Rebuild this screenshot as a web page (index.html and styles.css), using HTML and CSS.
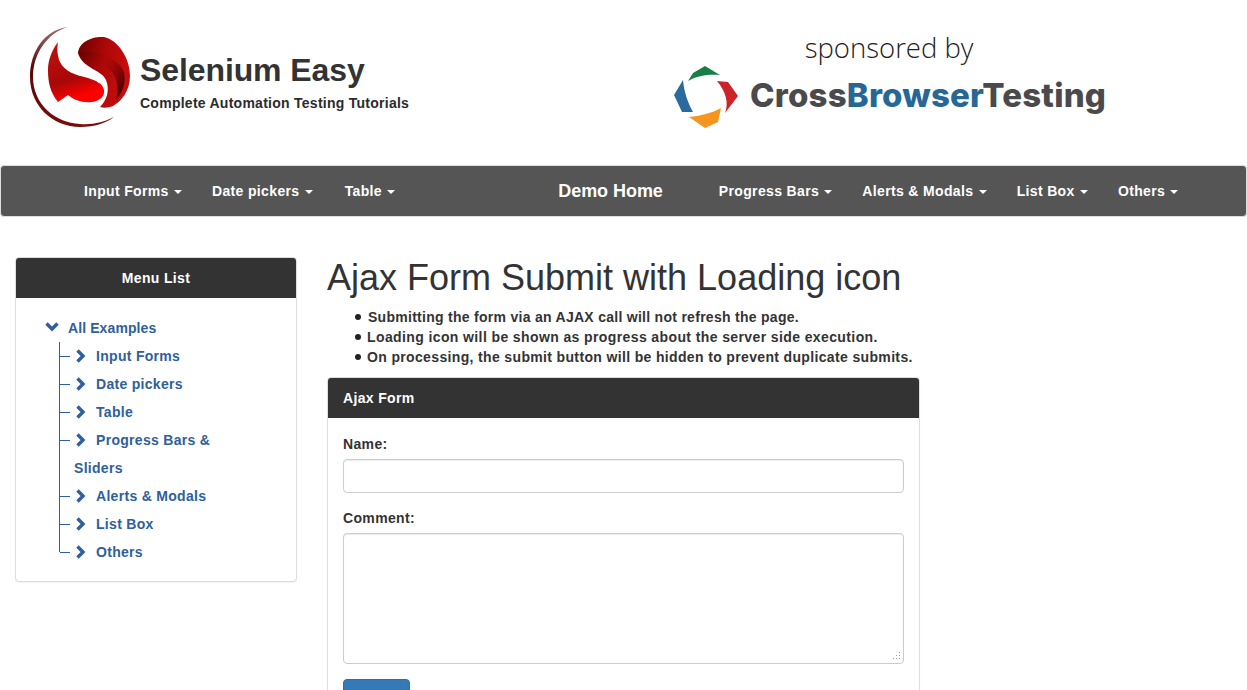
FILE: index.html
```html
<!DOCTYPE html>
<html lang="en">
<head>
  <meta charset="UTF-8" />
  <title>Selenium Easy - Ajax Form Submit</title>
  <link rel="stylesheet" href="styles.css">
</head>
<body>
  <header class="top">
    <div class="brand">
      <svg class="brand-logo" width="110" height="110" viewBox="25 22 110 110">
        <defs>
          <linearGradient id="ringGrad" x1="0.5" y1="0" x2="0.6" y2="1">
            <stop offset="0" stop-color="#9a6a6a" />
            <stop offset="0.35" stop-color="#5a0505" />
            <stop offset="1" stop-color="#7a0c0c" />
          </linearGradient>
          <linearGradient id="topGrad" x1="0" y1="0" x2="1" y2="0.3">
            <stop offset="0" stop-color="#6a0000" />
            <stop offset="0.55" stop-color="#b00808" />
            <stop offset="1" stop-color="#c80d0d" />
          </linearGradient>
          <linearGradient id="foldGrad" x1="0" y1="0" x2="1" y2="0.6">
            <stop offset="0" stop-color="#5a0000" stop-opacity="0.7" />
            <stop offset="0.5" stop-color="#a00606" stop-opacity="0.2" />
            <stop offset="1" stop-color="#3a0000" stop-opacity="0.8" />
          </linearGradient>
          <linearGradient id="lowGrad" x1="0.3" y1="0" x2="0.6" y2="1">
            <stop offset="0" stop-color="#c01010" />
            <stop offset="0.6" stop-color="#a80808" />
            <stop offset="0.9" stop-color="#ff0000" />
          </linearGradient>
        </defs>
        <path fill="url(#ringGrad)" d="M68,27 C44,30 30,52 30,77 C30,106 53,127 80,127 C95,127 106,123 114,117 C104,122 93,125 80,124 C55,123 33,104 33,77 C33,54 47,33 68,27 Z" />
        <path fill="url(#topGrad)" d="M78,53 C79,42 92,36 104,37 C118,40 130,58 130,76 C130,90 122,101 113,106 C108,108 104,108 100,107 C107,100 110,90 106,80 C102,70 82,68 78,53 Z" />
        <path fill="url(#foldGrad)" d="M78,53 C92,49 112,54 122,68 C127,77 125,90 116,100 C119,88 118,76 108,68 C98,61 84,62 78,53 Z" />
        <path fill="url(#lowGrad)" d="M58,42 C52,50 48,60 48,70 C48,82 50,92 58,102 L68,95 C74,100 82,103 92,102 C100,101 105,96 104,90 C103,84 97,81 88,78 C76,75 65,72 60,62 C57,55 57,48 58,42 Z" />
      </svg>
      <div class="brand-text">
        <div class="brand-name">Selenium Easy</div>
        <div class="brand-tag">Complete Automation Testing Tutorials</div>
      </div>
    </div>
    <div class="sponsor">
      <div class="sponsor-by">sponsored by</div>
      <div class="cbt">
        <svg class="cbt-logo" width="66" height="66" viewBox="672 64 66 66">
          <path fill="#1a7f45" d="M705,66 L720,75 C710,74 698,75 688,81 L693,73 Z" />
          <path fill="#2a6a9e" d="M683,80 L674,95 L682,112 L693,112 C688,103 684,92 683,80 Z" />
          <path fill="#cc2229" d="M717,81 L728,82 L738,96 L725,113 C729,103 726,92 717,81 Z" />
          <path fill="#f7941e" d="M689,117 L705,128 L718,122 L721,108 C712,113 700,116 689,117 Z" />
        </svg>
        <div class="cbt-name">Cross<span class="cbt-blue">Browser</span>Testing</div>
      </div>
    </div>
  </header>

  <nav class="navbar">
    <ul class="nav-group">
      <li>Input Forms <span class="caret"></span></li>
      <li class="nav-wide">Date pickers <span class="caret"></span></li>
      <li>Table <span class="caret"></span></li>
    </ul>
    <a class="nav-home">Demo Home</a>
    <ul class="nav-group">
      <li>Progress Bars <span class="caret"></span></li>
      <li>Alerts &amp; Modals <span class="caret"></span></li>
      <li>List Box <span class="caret"></span></li>
      <li>Others <span class="caret"></span></li>
    </ul>
  </nav>

  <svg width="0" height="0" class="icon-defs">
    <symbol id="chev-right" viewBox="0 0 12 14">
      <path d="M2.5,1.5 L8,7 L2.5,12.5" fill="none" stroke="currentColor" stroke-width="3.4" />
    </symbol>
    <symbol id="chev-down" viewBox="0 0 14 12">
      <path d="M1.5,2.5 L7,8 L12.5,2.5" fill="none" stroke="currentColor" stroke-width="3.4" />
    </symbol>
  </svg>

  <div class="content">
    <aside class="panel side">
      <div class="panel-head center">Menu List</div>
      <div class="side-body">
        <div class="tree-root">
          <svg class="chev-down" width="14" height="12"><use href="#chev-down" /></svg>
          All Examples
        </div>
        <ul class="tree">
          <li><svg class="chev" width="12" height="14"><use href="#chev-right" /></svg>Input Forms</li>
          <li><svg class="chev" width="12" height="14"><use href="#chev-right" /></svg>Date pickers</li>
          <li><svg class="chev" width="12" height="14"><use href="#chev-right" /></svg>Table</li>
          <li><svg class="chev" width="12" height="14"><use href="#chev-right" /></svg>Progress Bars &amp; Sliders</li>
          <li><svg class="chev" width="12" height="14"><use href="#chev-right" /></svg>Alerts &amp; Modals</li>
          <li><svg class="chev" width="12" height="14"><use href="#chev-right" /></svg>List Box</li>
          <li><svg class="chev" width="12" height="14"><use href="#chev-right" /></svg>Others</li>
        </ul>
      </div>
    </aside>

    <main class="main">
      <h2>Ajax Form Submit with Loading icon</h2>
      <ul class="notes">
        <li>Submitting the form via an AJAX call will not refresh the page.</li>
        <li>Loading icon will be shown as progress about the server side execution.</li>
        <li>On processing, the submit button will be hidden to prevent duplicate submits.</li>
      </ul>
      <div class="panel form-panel">
        <div class="panel-head">Ajax Form</div>
        <form class="form-body">
          <label for="title">Name:</label>
          <input id="title" type="text">
          <label for="description">Comment:</label>
          <textarea id="description"></textarea>
          <button type="button">Submit</button>
        </form>
      </div>
    </main>
  </div>
</body>
</html>
```

FILE: styles.css
```css
body {
  font-family: "Liberation Sans", Arial, sans-serif;
  font-size: 14px;
  font-weight: bold;
  letter-spacing: 0.35px;
  line-height: 20px;
  color: #333;
  background: #fff;
  margin: 0;
}

ul {
  list-style: none;
  margin: 0;
  padding: 0;
}

/* top logos */
.top {
  display: flex;
  height: 165px;
}

.brand {
  display: flex;
  align-items: flex-start;
  width: 665px;
  padding: 22px 0 0 25px;
  box-sizing: border-box;
}

.brand-logo {
  flex: none;
}

.brand-text {
  margin: 26px 0 0 5px;
}

.brand-name {
  font-size: 32px;
  line-height: 44px;
  letter-spacing: -0.1px;
}

.brand-tag {
  margin-top: 1px;
  color: #2b2b2b;
  letter-spacing: 0.26px;
}

.sponsor {
  padding: 30px 0 0 7px;
}

.sponsor-by {
  font-family: "Open Sans", sans-serif;
  font-weight: 300;
  font-size: 27.5px;
  line-height: 36px;
  letter-spacing: 0;
  color: #222;
  text-align: center;
  margin-bottom: -2px;
}

.cbt {
  display: flex;
  align-items: center;
  gap: 12px;
}

.cbt-name {
  font-family: Inter, sans-serif;
  font-weight: 800;
  font-size: 33px;
  letter-spacing: 0.2px;
  line-height: 40px;
  color: #4a4a4c;
  margin-top: -4px;
}

.cbt-blue {
  color: #266796;
}

/* navbar */
.navbar {
  display: flex;
  align-items: center;
  height: 50px;
  padding-left: 68px;
  background: #555;
  border: 1px solid #ddd;
  border-radius: 4px;
  color: #fff;
}

.nav-group {
  display: flex;
}

.nav-group li {
  padding: 0 15px;
  white-space: nowrap;
}

.nav-group .nav-wide {
  padding-right: 17px;
}

.caret {
  display: inline-block;
  width: 0;
  height: 0;
  margin-left: 1px;
  vertical-align: middle;
  border-top: 4px solid #fff;
  border-left: 4px solid transparent;
  border-right: 4px solid transparent;
}

.nav-home {
  font-size: 18px;
  letter-spacing: -0.05px;
  margin: 0 41px 0 148px;
}

/* page columns */
.icon-defs {
  display: block;
  height: 0;
}

.content {
  display: flex;
  align-items: flex-start;
  gap: 30px;
  padding: 40px 0 0 15px;
}

.panel {
  border: 1px solid #ddd;
  border-radius: 4px;
  box-shadow: 0 1px 1px rgba(0,0,0,0.05);
  background: #fff;
}

.panel-head {
  background: #333;
  color: #fff;
  padding: 10px 15px;
  border-radius: 3px 3px 0 0;
  height: 20px;
}

.center {
  text-align: center;
}

/* side tree */
.side {
  width: 280px;
  flex: none;
}

.side-body {
  padding: 16px 15px 15px 29px;
  color: #2f6099;
  line-height: 28px;
  letter-spacing: 0.3px;
}

.tree-root {
  display: flex;
  align-items: center;
  height: 28px;
  letter-spacing: 0.1px;
}

.chev-down {
  margin-right: 9px;
  margin-top: -3px;
}

.tree {
  margin-left: 14px;
  margin-right: 50px;
}

.tree li {
  position: relative;
  padding-left: 14px;
  border-left: 1px solid #2f6099;
}

.tree li::before {
  content: "";
  position: absolute;
  left: 0;
  top: 14px;
  width: 10px;
  border-top: 1px solid #2f6099;
}

.tree li:last-child {
  border-left-color: transparent;
}

.tree li:last-child::after {
  content: "";
  position: absolute;
  left: -1px;
  top: 0;
  height: 14px;
  border-left: 1px solid #2f6099;
}

.chev {
  margin: 0 9px 0 1px;
  vertical-align: -2px;
}

/* main column */
.main {
  width: 593px;
  padding-top: 1px;
}

h2 {
  font-size: 36px;
  font-weight: normal;
  line-height: 40px;
  letter-spacing: 0;
  margin: 0 0 9px;
}

.notes {
  padding-left: 40px;
  margin-bottom: 10px;
}

.notes li {
  position: relative;
}

.notes li::before {
  content: "";
  position: absolute;
  left: -12px;
  top: 7px;
  width: 6px;
  height: 6px;
  border-radius: 50%;
  background: #222;
}

.notes li:first-child {
  letter-spacing: 0.28px;
  text-indent: 1px;
}

.notes li:nth-child(2) {
  letter-spacing: 0.39px;
}

.form-panel {
  width: 591px;
}

.form-body {
  padding: 16px 15px 15px;
  display: flex;
  flex-direction: column;
  align-items: flex-start;
}

label {
  margin-bottom: 5px;
}

input, textarea {
  width: 100%;
  box-sizing: border-box;
  border: 1px solid #ccc;
  border-radius: 4px;
  box-shadow: inset 0 1px 1px rgba(0,0,0,0.075);
  font: inherit;
  padding: 6px 12px;
}

input {
  height: 34px;
  margin-bottom: 15px;
}

textarea {
  height: 131px;
  margin-bottom: 15px;
  resize: vertical;
}

textarea::-webkit-resizer {
  background: url("data:image/svg+xml,%3Csvg xmlns='http://www.w3.org/2000/svg' width='15' height='15'%3E%3Cpath fill='%23999' d='M11 4h1v1h-1zM11 7h1v1h-1zM8 7h1v1h-1zM11 10h1v1h-1zM8 10h1v1h-1zM5 10h1v1h-1z'/%3E%3C/svg%3E") no-repeat;
}

button {
  width: 67px;
  height: 34px;
  background: #337ab7;
  border: 1px solid #2e6da4;
  border-radius: 4px;
  color: #fff;
  font: inherit;
}
```
